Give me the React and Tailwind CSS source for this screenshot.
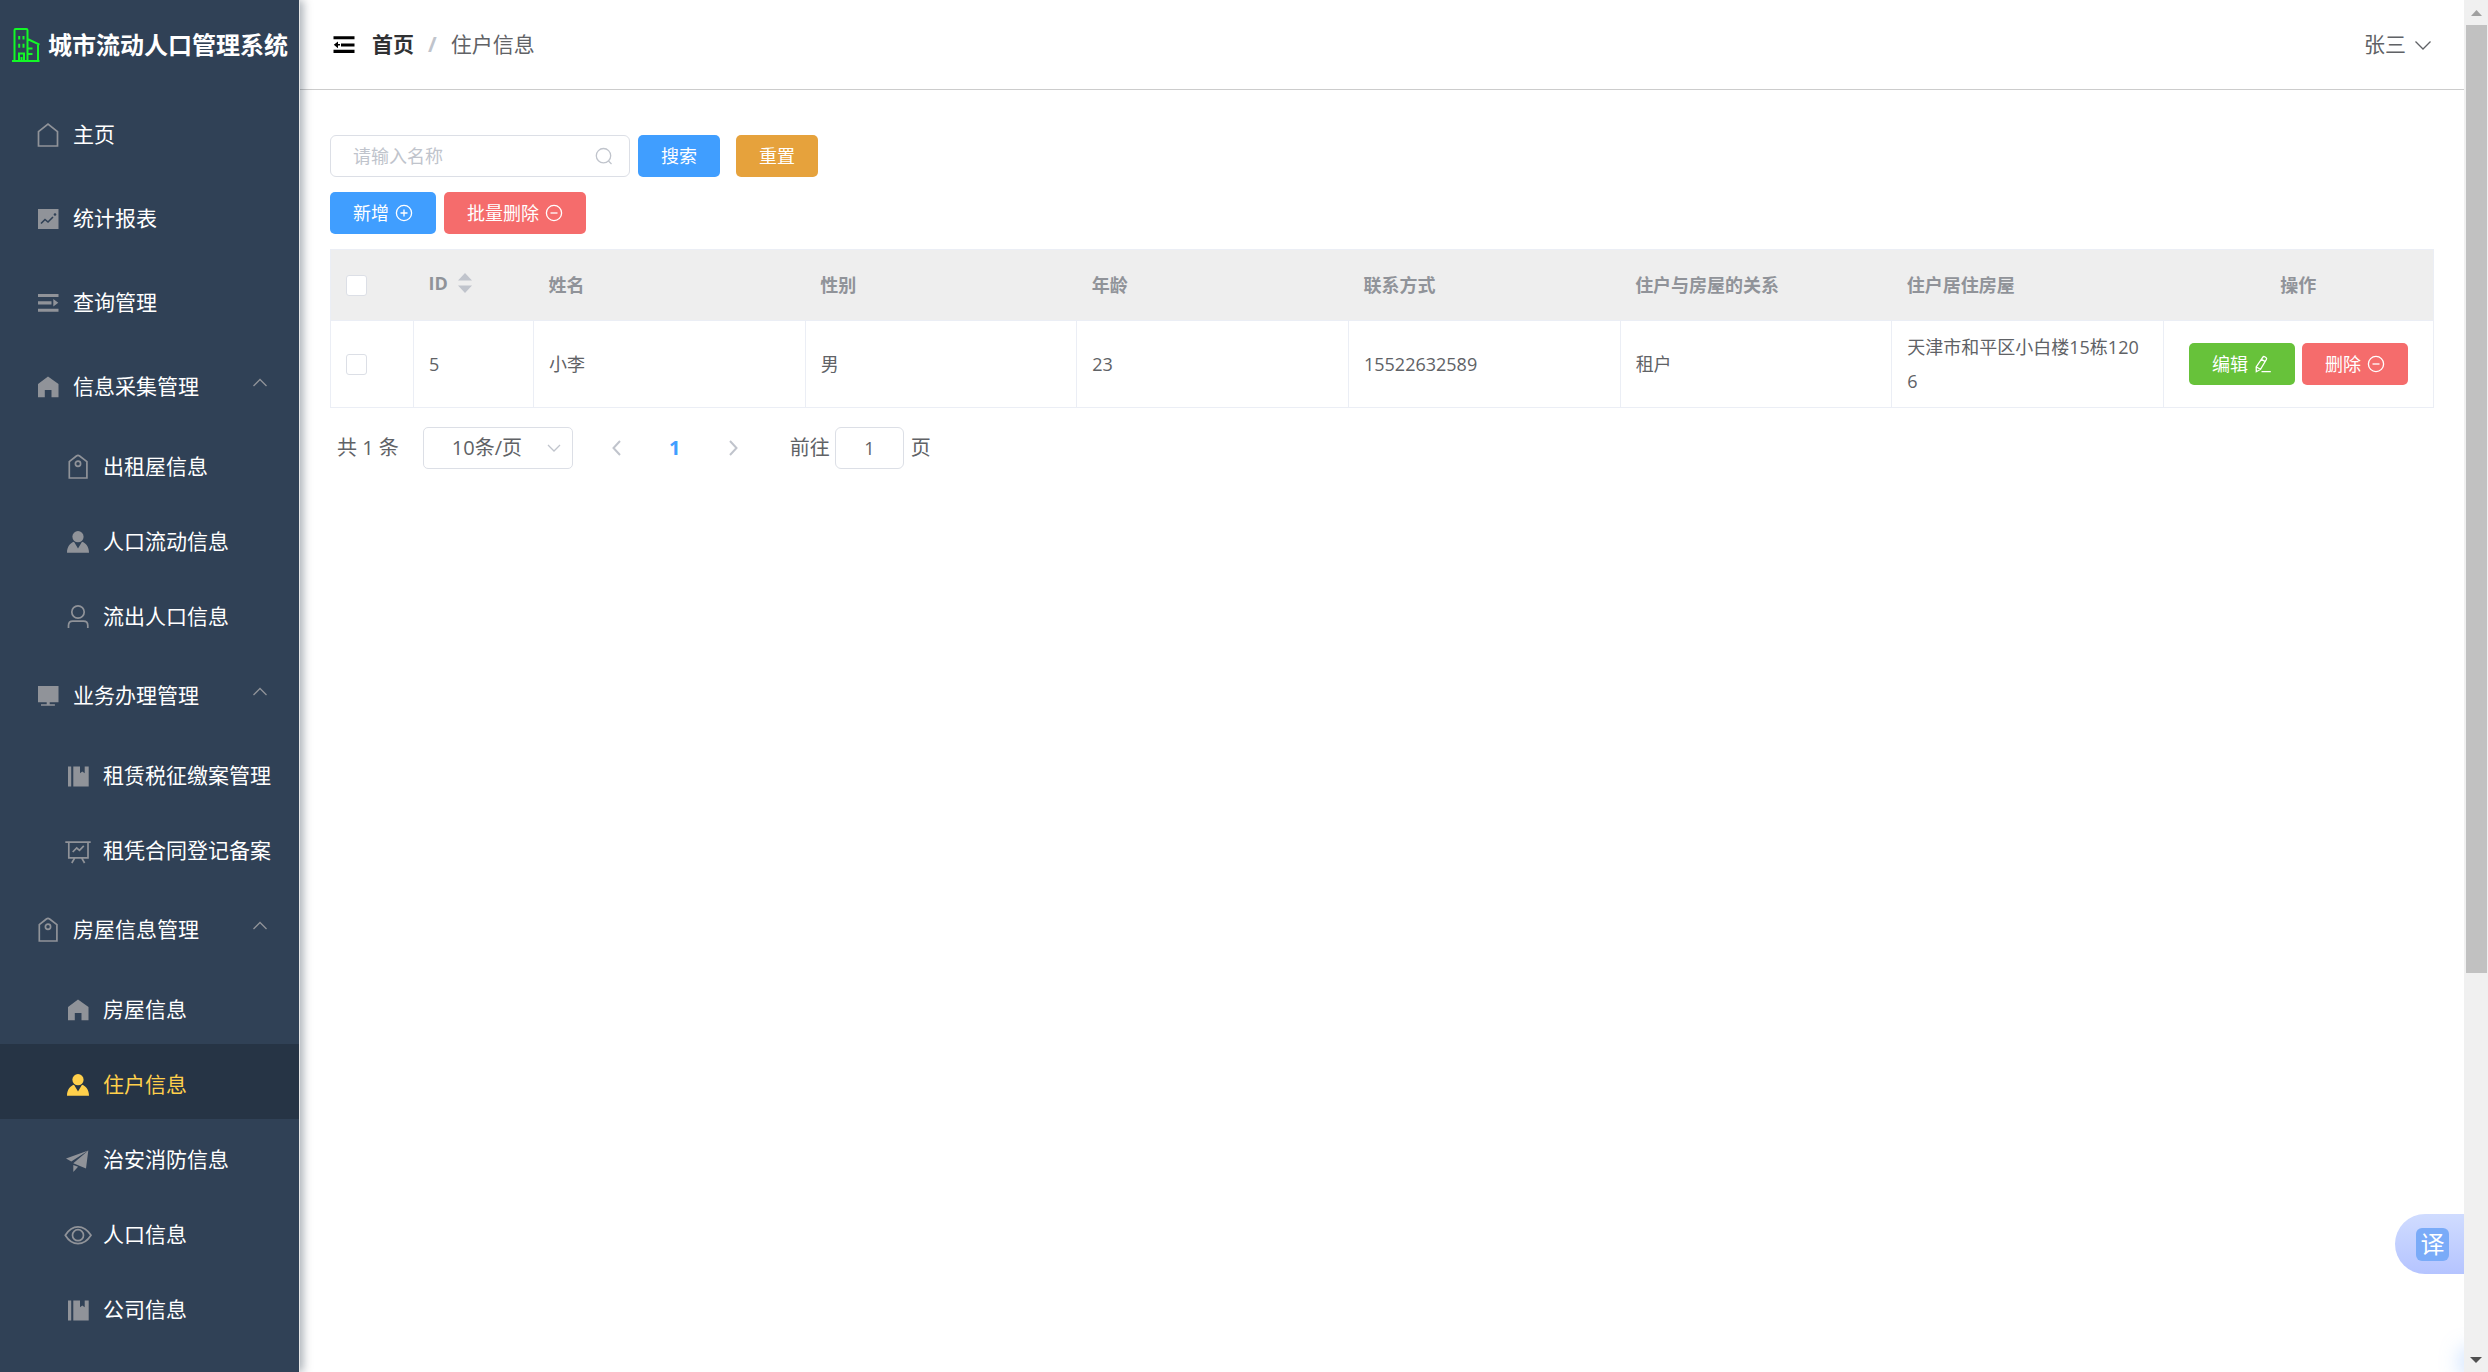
import { useState } from 'react'

const icons = {
  home: <path d="M4.5 25V10.6L14 3l9.5 7.6V25z" fill="none" stroke="currentColor" strokeWidth="1.7" />,
  chart: (
    <>
      <path d="M4 4h20.500v20H4z" fill="currentColor" />
      <path d="M7 18.500l4-4 3 2.500 5-5" fill="none" stroke="#304156" strokeWidth="1.600" />
      <circle cx="21" cy="9.500" r="1.300" fill="#304156" />
    </>
  ),
  unfold: <path d="M4 5h20.500v3H4zM4 12.200h13.500v3.300H4zM4 19.800h20.500v3H4zM19.300 10l5 3.800-5 3.800z" fill="currentColor" />,
  fold: <path d="M3.500 5.300h21v3h-21zM11 12.400h13.500v3H11zM3.500 18.800h21v3.200h-21zM8 10.400v6.800L3.800 13.800zM8 13h2v1.400H8z" fill="currentColor" />,
  houseFill: <path d="M14 3.500L4 11v13.200h6.800V17h6.700v7.200h7V11z" fill="currentColor" />,
  tag: (
    <g fill="none" stroke="currentColor" strokeWidth="1.700">
      <path d="M5.300 25V8.600L12.400 3q1.600-1.100 3.200 0l7.300 5.600V25z" />
      <circle cx="14" cy="10.700" r="2.600" />
    </g>
  ),
  userFill: (
    <g fill="currentColor">
      <circle cx="14" cy="8.700" r="5.600" />
      <path d="M3 24.700C3 19 6 15 10 13.800l4 6.700 4-6.700c4 1.200 7 5.200 7 10.900z" />
    </g>
  ),
  user: (
    <g fill="none" stroke="currentColor" strokeWidth="1.700">
      <circle cx="14" cy="9" r="6.200" />
      <path d="M4.500 25v-2.500q0-4.300 4.300-4.300h10.700q4.300 0 4.300 4.300V25" />
    </g>
  ),
  monitor: <path d="M4 4h20.500v16.300H4zM12.700 20.300h3v2h5.200v1.500H7v-1.500h5.700z" fill="currentColor" />,
  book: <path d="M4 4.500h3.200v20H4zM9.300 4.500H16v6.800l2.300-1.800 2.400 1.800V4.500h4v20H9.300z" fill="currentColor" />,
  board: (
    <g fill="none" stroke="currentColor" strokeWidth="1.700">
      <path d="M1.300 5.200h25.400M4.800 5.200v15.600h19.200V5.200M10.800 20.800L7.800 26M17.600 20.800l3 5.200" />
      <path d="M8.700 15l4-4 2.800 2.300 4.300-4.500" />
    </g>
  ),
  plane: <path d="M24.300 4.500L2 12.500l5.300 2.900zM24.300 4.500L9.300 17.300 22 22.500zM9.300 19l4.800 1.800L9.300 26z" fill="currentColor" />,
  eye: (
    <g fill="none" stroke="currentColor" strokeWidth="1.700">
      <path d="M1.300 14.200Q6.500 5.800 14 5.800t13 8.400Q21.500 22.700 14 22.700T1.300 14.200z" />
      <circle cx="14" cy="14.200" r="5.500" />
    </g>
  ),
}

const Icon = ({ name, className = '' }) => (
  <svg viewBox="0 0 28 28" className={`size-7 shrink-0 ${className}`} aria-hidden="true">
    {icons[name]}
  </svg>
)

const Chevron = ({ d, className }) => (
  <svg viewBox="0 0 18 18" className={`shrink-0 ${className}`} fill="none" stroke="currentColor" strokeWidth="1.300" aria-hidden="true">
    <path d={d} />
  </svg>
)

const CircleIcon = ({ plus }) => (
  <svg viewBox="0 0 18 18" className="size-[18px]" fill="none" stroke="currentColor" strokeWidth="1.300" aria-hidden="true">
    <circle cx="9" cy="9" r="7.600" />
    <path d={plus ? 'M5.500 9h7M9 5.500v7' : 'M5.500 9h7'} />
  </svg>
)

const PenIcon = () => (
  <svg viewBox="0 0 18 18" className="size-[18px]" fill="none" stroke="currentColor" strokeWidth="1.300" aria-hidden="true">
    <path d="M8.700 2.300q.8-1.200 2-.5l1.200.7q1.200.8.500 2L6.500 14.300 2.300 16.700 2.200 12zM7.500 4.300l3.700 2.300M2.300 12l4.200 2.300M7.500 16.700h9.300" />
  </svg>
)

const menu = [
  { label: '主页', icon: 'home' },
  { label: '统计报表', icon: 'chart' },
  { label: '查询管理', icon: 'unfold' },
  {
    label: '信息采集管理',
    icon: 'houseFill',
    children: [
      { label: '出租屋信息', icon: 'tag' },
      { label: '人口流动信息', icon: 'userFill' },
      { label: '流出人口信息', icon: 'user' },
    ],
  },
  {
    label: '业务办理管理',
    icon: 'monitor',
    children: [
      { label: '租赁税征缴案管理', icon: 'book' },
      { label: '租凭合同登记备案', icon: 'board' },
    ],
  },
  {
    label: '房屋信息管理',
    icon: 'tag',
    children: [
      { label: '房屋信息', icon: 'houseFill' },
      { label: '住户信息', icon: 'userFill' },
      { label: '治安消防信息', icon: 'plane' },
      { label: '人口信息', icon: 'eye' },
      { label: '公司信息', icon: 'book' },
    ],
  },
]

const rows = [
  { id: 5, name: '小李', sex: '男', age: 23, phone: '15522632589', relation: '租户', house: '天津市和平区小白楼15栋1206' },
]

const Sidebar = () => {
  const [active, setActive] = useState('住户信息')
  const [closed, setClosed] = useState([])

  const toggle = (label) =>
    setClosed(closed.includes(label) ? closed.filter((l) => l !== label) : [...closed, label])

  return (
    <aside className="relative z-10 w-[300px] shrink-0 bg-[#304156] border-r border-[#e6e6e6] shadow-[3px_0_9px_rgba(0,21,41,0.35)]">
      <div className="flex items-center h-[90px] pl-3 gap-2">
        <svg viewBox="0 0 28 34" className="w-7 h-[34px] shrink-0" fill="none" stroke="#13f827" strokeWidth="2" aria-hidden="true">
          <path d="M0 33h27.500M2.500 33V2.200q0-1.200 1.200-1.200h10.600q1.200 0 1.200 1.200V33M15.500 11l12 5.700M26 16v17M16 20.500h4.500M16 26h4.500M7 33v-7.500h5V33M9.500 29v4M7.200 8v3.500M11.500 8v3.500M7.200 15.800v4M11.500 15.800v4" />
        </svg>
        <h1 className="text-2xl font-bold text-white whitespace-nowrap">城市流动人口管理系统</h1>
      </div>
      <nav>
        <ul>
          {menu.map((item) => (
            <li key={item.label}>
              <button
                onClick={() => (item.children ? toggle(item.label) : setActive(item.label))}
                className="flex items-center w-full h-[84px] pt-1.5 px-[30px] text-[21px] text-white hover:bg-[#263445]"
              >
                <Icon name={item.icon} className="ml-1 mr-[11px] text-[#909399]" />
                {item.label}
                {item.children && (
                  <Chevron d="M2.500 12L9 5.500l6.500 6.500" className="size-[18px] ml-auto mb-2 text-[#909399]" />
                )}
              </button>
              {item.children && !closed.includes(item.label) && (
                <ul>
                  {item.children.map((child) => (
                    <li key={child.label}>
                      <button
                        onClick={() => setActive(child.label)}
                        className={`flex items-center w-full h-[75px] pt-1.5 pl-[60px] text-[21px] whitespace-nowrap ${
                          active === child.label ? 'bg-[#263445] text-[#ffd04b]' : 'text-white hover:bg-[#263445]'
                        }`}
                      >
                        <Icon
                          name={child.icon}
                          className={`ml-1 mr-[11px] ${active === child.label ? 'text-[#ffd04b]' : 'text-[#909399]'}`}
                        />
                        {child.label}
                      </button>
                    </li>
                  ))}
                </ul>
              )}
            </li>
          ))}
        </ul>
      </nav>
    </aside>
  )
}

const Header = () => (
  <header className="flex items-center justify-between h-[90px] px-[30px] border-b border-[#ccc] text-[21px]">
    <div className="flex items-center">
      <button aria-label="折叠菜单" className="text-black">
        <Icon name="fold" />
      </button>
      <nav className="flex items-center ml-3.5">
        <a href="#" className="font-bold text-[#303133]">首页</a>
        <span className="mx-3.5 font-bold text-[#c0c4cc]">/</span>
        <span className="text-[#606266]">住户信息</span>
      </nav>
    </div>
    <button className="flex items-center gap-2 pr-0.5 text-[#606266]">
      张三
      <Chevron d="M1.500 5.500L9 13l7.500-7.500" className="size-[18px]" />
    </button>
  </header>
)

const Button = ({ className, children }) => (
  <button className={`inline-flex items-center justify-center gap-1.5 h-[42px] px-[23px] rounded-[5px] text-lg text-white ${className}`}>
    {children}
  </button>
)

const Checkbox = ({ label }) => (
  <input
    type="checkbox"
    aria-label={label}
    className="block appearance-none size-[21px] rounded-[3px] border border-[#dcdfe6] bg-white checked:bg-[#409eff]"
  />
)

const ResidentTable = () => (
  <table className="w-full table-fixed border-collapse mt-[15px] text-lg text-left text-[#606266] border border-[#ebeef5]">
    <colgroup>
      <col className="w-[83px]" />
      <col className="w-[120px]" />
      <col span="6" />
      <col className="w-[270px]" />
    </colgroup>
    <thead className="bg-[#eee] text-[#909399] font-bold">
      <tr className="h-[71px] *:px-[15px]">
        <th><Checkbox label="全选" /></th>
        <th>
          <button className="flex items-center gap-2.5 pb-1">
            ID
            <svg viewBox="0 0 14 20" className="w-3.5 h-5 fill-[#c0c4cc]" aria-hidden="true">
              <path d="M0 7.500L7 0l7 7.500zM0 12.500h14L7 20z" />
            </svg>
          </button>
        </th>
        <th>姓名</th>
        <th>性别</th>
        <th>年龄</th>
        <th>联系方式</th>
        <th>住户与房屋的关系</th>
        <th>住户居住房屋</th>
        <th className="text-center">操作</th>
      </tr>
    </thead>
    <tbody>
      {rows.map((row) => (
        <tr key={row.id} className="*:px-[15px] *:py-[9px] *:border *:border-[#ebeef5] leading-[34px]">
          <td><Checkbox label={`选择${row.name}`} /></td>
          <td>{row.id}</td>
          <td>{row.name}</td>
          <td>{row.sex}</td>
          <td>{row.age}</td>
          <td>{row.phone}</td>
          <td>{row.relation}</td>
          <td className="break-all">{row.house}</td>
          <td>
            <div className="flex justify-center gap-[7px]">
              <Button className="bg-[#67c23a]">编辑 <PenIcon /></Button>
              <Button className="bg-[#f56c6c]">删除 <CircleIcon /></Button>
            </div>
          </td>
        </tr>
      ))}
    </tbody>
  </table>
)

const Pagination = () => {
  const [page, setPage] = useState('1')

  return (
    <div className="flex items-center mt-[19px] pl-[7px] text-xl text-[#606266]">
      <span>共 1 条</span>
      <div className="relative ml-6">
        <select
          aria-label="每页条数"
          className="block appearance-none w-[150px] h-[42px] pl-7 rounded-[5px] border border-[#dcdfe6] bg-white"
        >
          <option>10条/页</option>
          <option>20条/页</option>
          <option>50条/页</option>
        </select>
        <Chevron d="M3 6l6 6 6-6" className="absolute right-2.5 top-3 size-[18px] text-[#c0c4cc] pointer-events-none" />
      </div>
      <button aria-label="上一页" className="ml-[35px] text-[#c0c4cc]">
        <Chevron d="M12 2L5.500 9l6.500 7" className="size-[18px] stroke-2" />
      </button>
      <button className="w-[98px] font-bold text-[#409eff]">1</button>
      <button aria-label="下一页" className="text-[#c0c4cc]">
        <Chevron d="M6 2l6.500 7L6 16" className="size-[18px] stroke-2" />
      </button>
      <label className="flex items-center gap-[5px] ml-12">
        前往
        <input
          value={page}
          onChange={(e) => setPage(e.target.value)}
          className="w-[69px] h-[42px] rounded-md border border-[#dcdfe6] text-center text-lg"
        />
        <span className="ml-0.5">页</span>
      </label>
    </div>
  )
}

const App = () => (
  <div className={`flex min-h-screen bg-white font-["Open_Sans","Noto_Sans_CJK_SC",sans-serif]`}>
    <Sidebar />
    <div className="relative flex-1 min-w-0 overflow-hidden">
      <Header />
      <main className="px-[30px] pt-[45px]">
        <div className="flex items-center">
          <div className="relative">
            <input
              type="text"
              aria-label="名称"
              placeholder="请输入名称"
              className="block w-[300px] h-[42px] pl-[22px] pr-12 rounded-md border border-[#dcdfe6] text-lg placeholder:text-[#c0c4cc]"
            />
            <svg viewBox="0 0 18 18" className="absolute right-[17px] top-3 size-[18px]" fill="none" stroke="#c0c4cc" strokeWidth="1.300" aria-hidden="true">
              <circle cx="8.500" cy="8.700" r="7.200" />
              <path d="M13.500 14l3 3" />
            </svg>
          </div>
          <Button className="ml-2 bg-[#409eff]">搜索</Button>
          <Button className="ml-4 bg-[#e6a23c]">重置</Button>
        </div>
        <div className="flex gap-2 mt-[15px]">
          <Button className="bg-[#409eff]">新增 <CircleIcon plus /></Button>
          <Button className="bg-[#f56c6c]">批量删除 <CircleIcon /></Button>
        </div>
        <ResidentTable />
        <Pagination />
      </main>
      <div className="absolute left-full bottom-0 w-6 h-5 shadow-[0_0_20px_4px_rgba(120,175,255,0.35)]" />
      <button className="absolute right-0 bottom-[98px] flex items-center w-[69px] h-[60px] pl-[21px] rounded-l-full bg-linear-to-b from-[#d0dcff] to-[#b5c4ff]">
        <span className="flex items-center justify-center size-[33px] rounded-md bg-[#7aabf8] text-2xl leading-none text-white">译</span>
      </button>
    </div>
    <div className="relative z-10 flex flex-col items-center justify-between w-6 shrink-0 pb-[9px] bg-[#f0f0f0]">
      <div className="w-full">
        <svg viewBox="0 0 24 25" className="w-6 h-[25px]" aria-hidden="true">
          <path d="M7 16l5.500-6L18 16z" fill="#a0a0a0" />
        </svg>
        <div className="mx-auto w-[21px] h-[948px] bg-[#c1c1c1]" />
      </div>
      <svg viewBox="0 0 12 6" className="w-3 h-1.5" aria-hidden="true">
        <path d="M0 0h12L6 6z" fill="#505050" />
      </svg>
    </div>
  </div>
)

export default App
